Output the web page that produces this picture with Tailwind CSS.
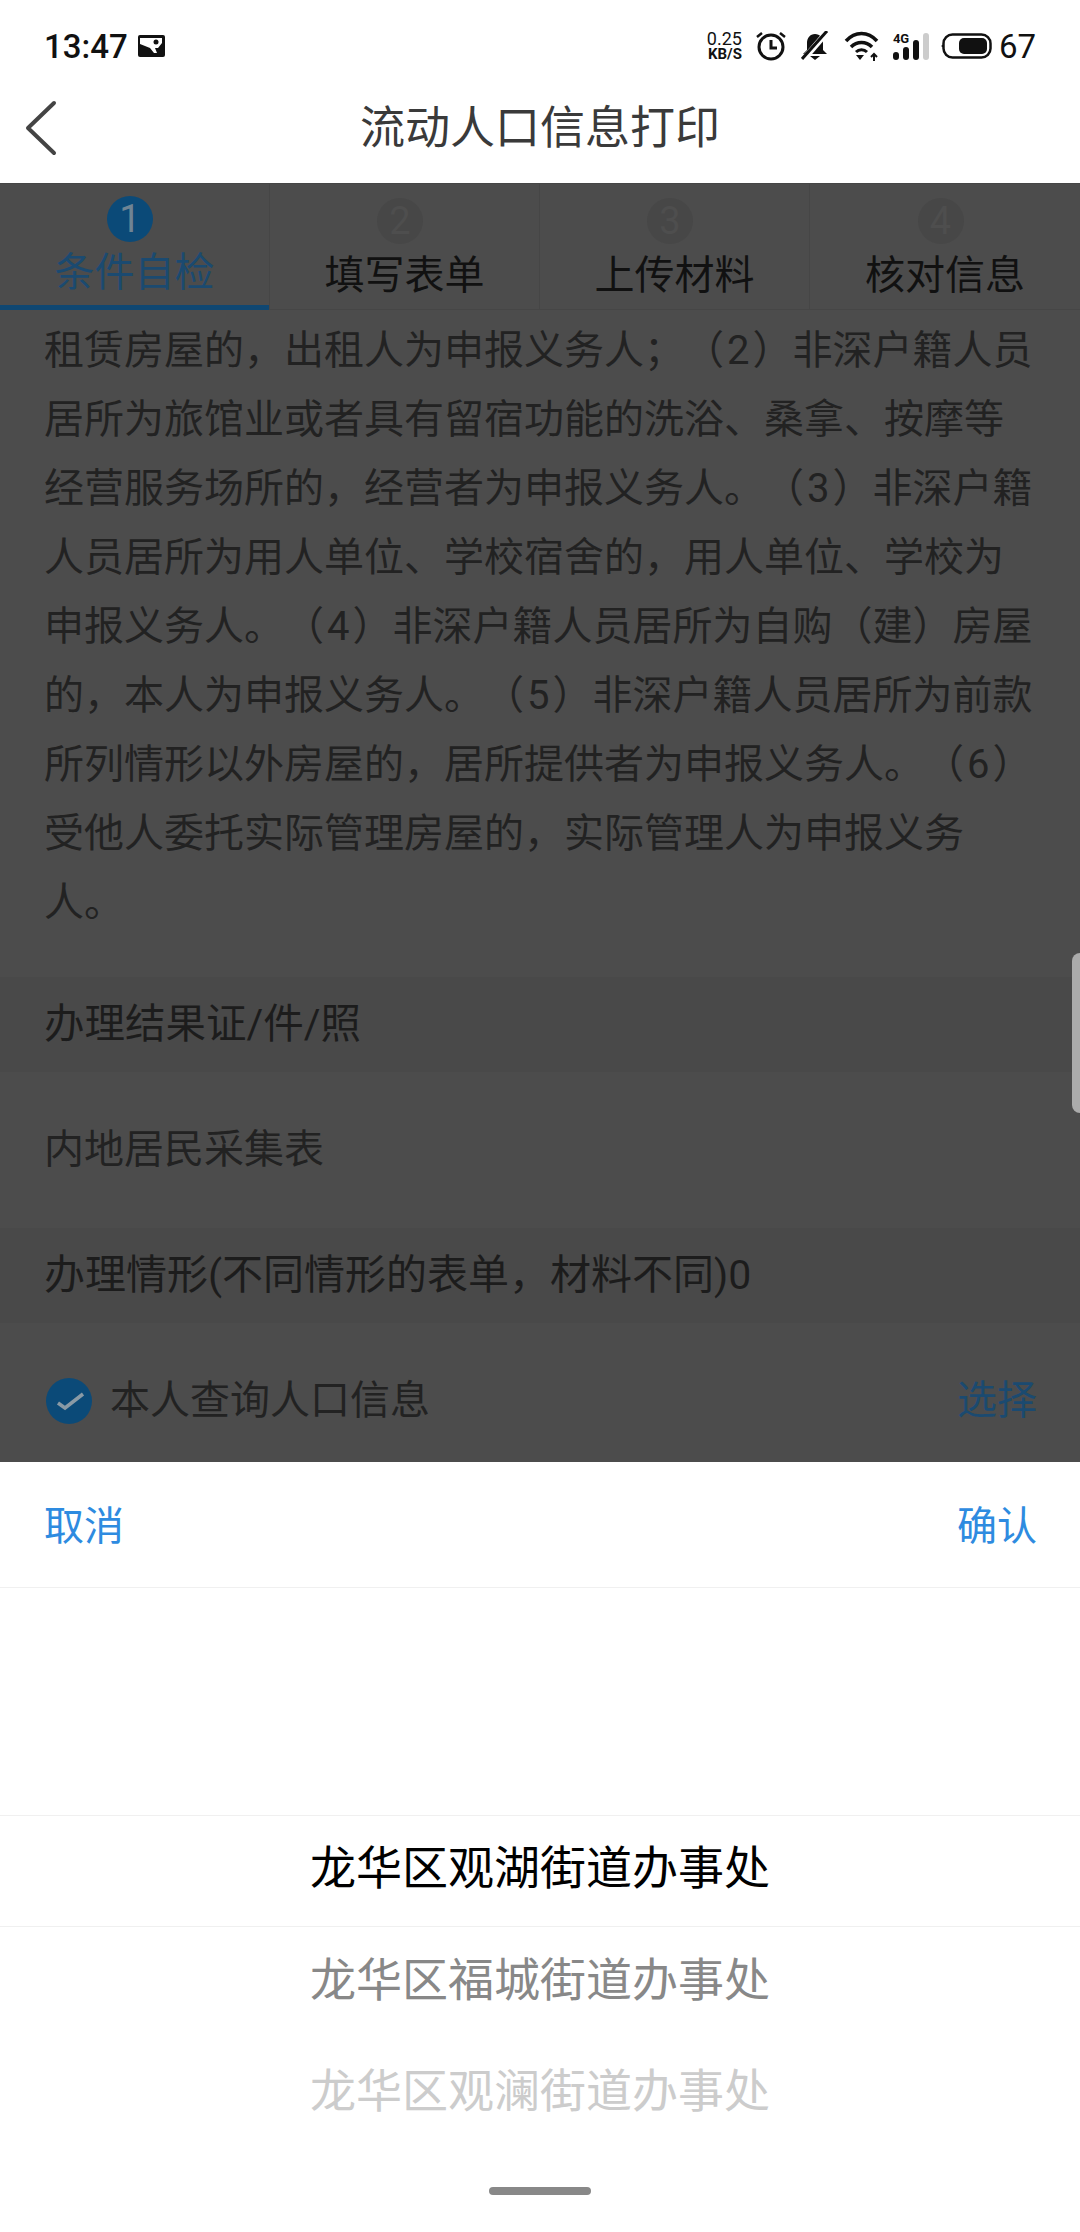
<!DOCTYPE html>
<html lang="zh-CN">

<head>
  <meta charset="UTF-8">
  <meta name="viewport" content="width=device-width, initial-scale=1.0">
  <title>流动人口信息打印</title>
  <script src="https://cdn.jsdelivr.net/npm/@tailwindcss/browser@4"></script>
</head>

<body class="w-[1080px] h-[2232px] overflow-hidden bg-white font-['Roboto','Noto_Sans_CJK_SC',sans-serif]">
  <!-- status bar -->
  <div class="h-[64px] flex items-center justify-between px-[44px] pt-[28px] text-[#111]">
    <div class="flex items-center gap-[10px]">
      <span class="text-[33px] font-medium leading-none">13:47</span>
      <svg width="27" height="22" viewBox="0 0 27 22">
        <rect width="27" height="22" rx="2" fill="#111" />
        <path d="M2 3h22v5l-4 5h-3l2 5h-3l-4-5-10-4z" fill="#fff" />
        <circle cx="18" cy="7" r="2.5" fill="#111" />
      </svg>
    </div>
    <div class="flex items-center">
      <div class="flex flex-col items-end w-[36px] mr-[14px] text-[#111]">
        <span class="text-[18px] leading-[16px]">0.25</span>
        <span class="text-[15px] font-bold leading-[14px]">KB/S</span>
      </div>
      <svg class="mr-[15px]" width="30" height="30" viewBox="0 0 30 30" fill="none" stroke="#111">
        <circle cx="15" cy="16" r="12" stroke-width="3" />
        <path d="M15 9v8h6" stroke-width="3" />
        <path d="M1 6l5-4M29 6l-5-4" stroke-width="2.5" />
      </svg>
      <svg class="mr-[15px]" width="28" height="30" viewBox="0 0 28 30">
        <path d="M14 3c-5 0-8 4-8 9v7l-4 4h24l-4-4v-7c0-5-3-9-8-9z" fill="#111" />
        <path d="M9 25h10l-5 4z" fill="#111" />
        <path d="M2 29L27 0" stroke="#fff" stroke-width="6" />
        <path d="M1 28L26 0" stroke="#111" stroke-width="3" />
      </svg>
      <svg class="mr-[14px]" width="35" height="30" viewBox="0 0 35 30" fill="none" stroke="#111">
        <path d="M2 10c9-10 22-10 31 0" stroke-width="3.5" />
        <path d="M7 16c6-6 15-6 21 0" stroke-width="3.5" />
        <path d="M12 21c3-3 8-3 11 0" stroke-width="3" />
        <path d="M12 24h8l-4 5z" fill="#111" stroke="none" />
        <path d="M30 30v-6M27 26l3-3 3 3" stroke-width="2" />
      </svg>
      <div class="relative mr-[10px] w-[37px] h-[28px] flex items-end gap-[4px]">
        <span class="absolute left-0 top-0 text-[13px] font-bold leading-none">4G</span>
        <span class="w-[6px] h-[8px] rounded-full bg-[#111]"></span>
        <span class="w-[6px] h-[13px] rounded-full bg-[#111]"></span>
        <span class="w-[6px] h-[20px] rounded-full bg-[#111]"></span>
        <span class="w-[6px] h-[27px] rounded-full bg-[#ccc]"></span>
      </div>
      <svg class="mr-[7px]" width="52" height="26" viewBox="0 0 52 26">
        <path d="M1 13l3-2v4z" fill="#111" />
        <rect x="3.5" y="1.5" width="47" height="23" rx="9" fill="none" stroke="#111" stroke-width="2.5" />
        <rect x="19" y="5" width="28" height="16" rx="5" fill="#111" />
      </svg>
      <span class="text-[33px] leading-none">67</span>
    </div>
  </div>

  <!-- title bar -->
  <div class="h-[119px] relative flex items-center justify-center pt-[10px]">
    <svg class="absolute left-[24px] top-[36px]" width="34" height="56" viewBox="0 0 34 56" fill="none">
      <path d="M30 3L4 28l26 25" stroke="#444" stroke-width="4" stroke-linecap="round" stroke-linejoin="round" />
    </svg>
    <span class="text-[45px] leading-none text-[#3a3a3a]">流动人口信息打印</span>
  </div>

  <!-- dimmed page -->
  <div class="h-[1279px] bg-[#4c4c4c] relative">
    <div class="h-[127px] grid grid-cols-4 border-t border-b border-[#464646]">
      <div class="relative flex flex-col items-center border-r border-[#464646]">
        <span
          class="w-[46px] h-[46px] mt-[12px] mr-[9px] rounded-full bg-[#0b4a78] text-[#6f8494] text-[38px] leading-[46px] text-center">1</span>
        <span class="text-[40px] leading-none text-[#1b4a70] mt-[11px]">条件自检</span>
        <span class="absolute left-0 right-0 -bottom-[1px] h-[5px] bg-[#0f4772]"></span>
      </div>
      <div class="flex flex-col items-center border-r border-[#464646]">
        <span
          class="w-[46px] h-[46px] mt-[14px] mr-[9px] rounded-full bg-[#474747] text-[#4e4e4e] text-[38px] leading-[46px] text-center">2</span>
        <span class="text-[40px] leading-none text-[#111] mt-[12px]">填写表单</span>
      </div>
      <div class="flex flex-col items-center border-r border-[#464646]">
        <span
          class="w-[46px] h-[46px] mt-[14px] mr-[9px] rounded-full bg-[#474747] text-[#4e4e4e] text-[38px] leading-[46px] text-center">3</span>
        <span class="text-[40px] leading-none text-[#111] mt-[12px]">上传材料</span>
      </div>
      <div class="flex flex-col items-center">
        <span
          class="w-[46px] h-[46px] mt-[14px] mr-[9px] rounded-full bg-[#474747] text-[#4e4e4e] text-[38px] leading-[46px] text-center">4</span>
        <span class="text-[40px] leading-none text-[#111] mt-[12px]">核对信息</span>
      </div>
    </div>

    <div class="h-[667px] px-[44px] pt-[6px] text-[40px] leading-[69px] text-[#222] whitespace-nowrap [text-spacing-trim:space-all]">
      <p>租赁房屋的，出租人为申报义务人；（<span class="px-[3px]">2</span>）非深户籍人员</p>
      <p>居所为旅馆业或者具有留宿功能的洗浴、桑拿、按摩等</p>
      <p>经营服务场所的，经营者为申报义务人。（<span class="px-[3px]">3</span>）非深户籍</p>
      <p>人员居所为用人单位、学校宿舍的，用人单位、学校为</p>
      <p>申报义务人。（<span class="px-[3px]">4</span>）非深户籍人员居所为自购（建）房屋</p>
      <p>的，本人为申报义务人。（<span class="px-[3px]">5</span>）非深户籍人员居所为前款</p>
      <p>所列情形以外房屋的，居所提供者为申报义务人。（<span class="px-[3px]">6</span>）</p>
      <p>受他人委托实际管理房屋的，实际管理人为申报义务</p>
      <p>人。</p>
    </div>

    <div class="h-[95px] bg-[#494949] flex items-center px-[44px] text-[40.5px] text-[#1c1c1c]">办理结果证/件/照</div>
    <div class="h-[156px] flex items-center px-[44px] text-[40px] text-[#222]">内地居民采集表</div>
    <div class="h-[95px] bg-[#494949] flex items-center px-[44px] text-[41px] text-[#1c1c1c]">办理情形(不同情形的表单，材料不同)0</div>
    <div class="h-[139px] flex items-center justify-between pl-[44px] pr-[43px] pt-[16px] text-[40px]">
      <div class="flex items-center gap-[18px] text-[#222]">
        <svg width="46" height="46" viewBox="0 0 46 46" class="ml-[2px]">
          <circle cx="23" cy="23" r="23" fill="#0b4a78" />
          <path d="M12 25l7 5 18-14" fill="none" stroke="#8a9aa5" stroke-width="3.5" />
        </svg>
        <span>本人查询人口信息</span>
      </div>
      <span class="text-[#1b4a70]">选择</span>
    </div>

    <span class="absolute right-0 top-[770px] w-[8px] h-[160px] rounded-l-[8px] bg-[#ababab]"></span>
  </div>

  <!-- picker sheet -->
  <div class="h-[770px] bg-white relative">
    <div class="h-[126px] flex items-center justify-between pl-[44px] pr-[43px] pt-[4px] border-b border-[#f0f0f0] text-[40px] text-[#2e8be0]">
      <span>取消</span>
      <span>确认</span>
    </div>
    <div class="mt-[227px] h-[112px] pb-[5px] border-t border-b border-[#f0f0f0] flex items-center justify-center text-[46px] text-black">
      龙华区观湖街道办事处</div>
    <div class="h-[111px] pb-[5px] flex items-center justify-center text-[46px] text-[#888]">龙华区福城街道办事处</div>
    <div class="h-[111px] pb-[5px] flex items-center justify-center text-[46px] text-[#ccc]">龙华区观澜街道办事处</div>
    <span class="absolute left-[489px] top-[725px] w-[102px] h-[8px] rounded-full bg-[#888]"></span>
  </div>
</body>

</html>
